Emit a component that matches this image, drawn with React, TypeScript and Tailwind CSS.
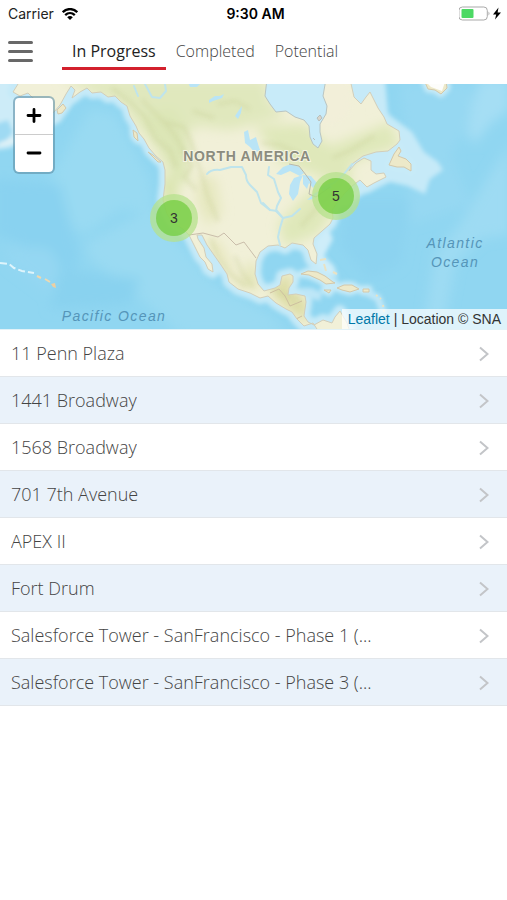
import React, { useState } from 'react';

interface Project {
  id: number;
  name: string;
}

interface Cluster {
  id: number;
  count: number;
  position: string;
}

const TABS = ['In Progress', 'Completed', 'Potential'];

const PROJECTS: Project[] = [
  { id: 1, name: '11 Penn Plaza' },
  { id: 2, name: '1441 Broadway' },
  { id: 3, name: '1568 Broadway' },
  { id: 4, name: '701 7th Avenue' },
  { id: 5, name: 'APEX II' },
  { id: 6, name: 'Fort Drum' },
  { id: 7, name: 'Salesforce Tower - SanFrancisco - Phase 1 (...' },
  { id: 8, name: 'Salesforce Tower - SanFrancisco - Phase 3 (...' },
];

const CLUSTERS: Cluster[] = [
  { id: 1, count: 3, position: 'left-[150px] top-[110px]' },
  { id: 2, count: 5, position: 'left-[312px] top-[88px]' },
];

// Coastlines, in map units
const MAINLAND =
  'M12 -5 L18 0 L13 8 L20 12 L28 9 L33 14 L40 17 L46 22 L40 36 L54 28 L60 21 L66 10 L71 2 L75 6 L72 14 L80 8 L87 4 L92 9 L101 8 L108 13 L115 12 L121 18 L127 22 L130 32 L136 42 L139 49 L144 55 L149 64 L156 72 L163 78 L165 86 L165 100 L163 116 L167 130 L173 139 L183 145 L189 151 L192 157 L196 165 L200 173 L205 178 L208 185 L213 188 L212 180 L206 173 L204 164 L198 155 L197 151 L202 151 L207 161 L214 171 L221 181 L227 190 L229 198 L238 205 L250 209 L260 214 L268 212 L276 219 L286 225 L292 228 L297 235 L304 242 L313 239 L319 248 L350 248 L347 239 L340 227 L335 233 L332 239 L323 236 L314 241 L308 238 L304 232 L306 218 L305 212 L296 210 L288 211 L289 204 L293 198 L293 192 L290 190 L282 192 L280 201 L275 204 L264 207 L258 200 L255 190 L256 177 L260 168 L268 162 L278 161 L285 164 L292 159 L303 161 L308 166 L311 176 L316 180 L317 170 L313 160 L314 154 L322 147 L330 140 L333 134 L332 126 L337 119 L344 110 L352 102 L360 96 L367 103 L374 99 L386 93 L384 89 L376 90 L371 86 L371 77 L364 74 L356 79 L349 87 L352 80 L363 72 L376 68 L388 67 L397 60 L400 56 L399 47 L387 40 L384 33 L378 24 L370 8 L366 13 L361 20 L354 13 L350 -5 Z';

const ISLANDS = [
  'M389 81 L394 70 L399 63 L401 67 L398 72 L406 75 L411 80 L411 87 L404 83 L397 83 Z',
  'M424 -4 L428 5 L435 6 L441 10 L447 4 L446 -4 Z',
  'M57 26 L63 20 L66 24 L62 29 L58 30 Z',
  'M133 46 L137 49 L138 57 L134 53 Z',
  'M148 68 L153 71 L161 78 L158 78 Z',
  'M301 190 L308 187 L317 188 L325 192 L333 198 L335 199 L326 200 L320 196 L309 191 Z',
  'M337 204 L344 201 L352 201 L359 205 L350 208 L342 206 Z',
  'M363 205 L369 205 L369 208 L363 208 Z',
  'M324 206 L331 206 L329 209 Z',
];

const HUDSON_BAY =
  'M267 -5 L265 12 L270 20 L276 28 L286 27 L295 33 L304 36 L309 42 L310 53 L313 60 L318 64 L322 57 L320 48 L320 40 L326 30 L327 22 L323 12 L326 -5 Z';

const LAKES = [
  'M276 90 L283 83 L291 80 L299 83 L304 89 L300 92 L290 87 L281 91 Z',
  'M290 101 L294 94 L303 91 L300 98 L298 110 L293 117 L289 110 Z',
  'M303 91 L311 92 L317 99 L313 104 L309 99 L307 105 L303 100 Z',
  'M307 116 L315 109 L320 107 L313 115 Z',
  'M321 104 L331 101 L332 104 L323 107 Z',
  'M244 48 L248 46 L250 56 L256 53 L258 60 L260 66 L255 69 L250 63 L245 59 Z',
  'M209 16 L215 12 L220 12 L224 10 L222 14 L213 17 L209 19 Z',
  'M235 32 L239 26 L242 22 L241 29 L238 35 Z',
  'M188 -2 L200 0 L197 3 L190 3 Z',
];

const RIVERS = [
  'M207 90 Q211 85 220 86 L231 83 L242 83 L246 91 Q246 97 250 101 L257 108 L261 119 L270 126',
  'M269 83 L268 91 L274 95 L278 108 L281 114 L277 122 L276 127 L283 134 L280 144 L278 153 L280 161',
  'M263 119 L270 126 L277 127 L282 133',
  'M134 2 L138 12 M145 0 L152 13 L160 14 L166 7 L165 0',
  'M321 104 L334 99 L344 90 L352 80',
  'M300 125 L292 132 L283 134',
];

const MapTiles: React.FC = () => (
  <svg
    className="absolute inset-0 h-full w-full"
    viewBox="0 0 507 245"
    preserveAspectRatio="xMidYMid slice"
    role="img"
    aria-label="Map of North America"
  >
    <defs>
      <filter id="relief" x="-20%" y="-20%" width="140%" height="140%">
        <feGaussianBlur stdDeviation="6" />
      </filter>
      <filter id="shelf" x="-20%" y="-20%" width="140%" height="140%">
        <feGaussianBlur stdDeviation="2" />
      </filter>
      <clipPath id="land">
        <path d={MAINLAND} />
      </clipPath>
    </defs>

    <rect width="507" height="245" fill="#90d6f1" />

    {/* Ocean floor */}
    <g filter="url(#relief)">
      <path d="M55 85 L90 25 L115 30 L150 95 L155 130 L120 125 L85 150 L40 130 Z" fill="#99daf2" />
      <path d="M85 160 L150 125 L215 200 L270 230 L290 250 L180 250 L130 205 L90 175 Z" fill="#9adaf2" />
      <path d="M-5 95 L60 100 L80 175 L60 200 L20 160 L-5 150 Z" fill="#89d2f0" />
      <path d="M5 160 L50 165 L65 190 L50 210 L10 180 Z" fill="#94d7f2" />
      <path d="M60 185 L140 195 L130 220 L50 225 Z" fill="#89d2ef" />
      <path d="M400 0 L470 0 L475 30 L450 70 L470 120 L410 140 L405 60 Z" fill="#96d8f2" />
      <path d="M480 -5 L510 -5 L510 25 L490 40 L475 60 L467 50 L472 20 Z" fill="#a5def4" />
      <path d="M490 90 L510 60 L510 150 L480 155 L455 180 L445 235 L425 235 L435 170 L460 140 Z" fill="#9edbf3" />
      <path d="M350 115 L410 115 L400 180 L370 195 L340 160 Z" fill="#8cd3f0" />
    </g>

    {/* Continental shelf */}
    <g filter="url(#shelf)">
      <path d="M-5 -5 L90 -5 L80 10 L60 38 L38 48 L10 64 L-5 66 Z" fill="#cdecf8" />
      <path d="M-5 40 L8 36 L13 48 L5 58 L-5 60 Z" fill="#9fdaf3" />
      <path d={MAINLAND} fill="none" stroke="#c6eaf8" strokeWidth="12" strokeLinejoin="round" />
      <path d="M352 -5 L385 -5 L388 30 L412 48 L424 68 L438 78 L443 86 L430 95 L425 110 L408 102 L390 98 L360 112 L345 125 L340 105 Z" fill="#c6eaf8" />
      <path d="M316 158 L328 144 L333 155 L324 172 L334 182 L338 194 L328 190 L318 184 Z" fill="#ceedf9" />
      <path d="M305 212 L320 217 L322 209 L312 204 L296 204 Z" fill="#bde6f7" />
      {ISLANDS.map((d) => (
        <path key={d} d={d} fill="none" stroke="#c8ebf8" strokeWidth="7" strokeLinejoin="round" />
      ))}
      <path d="M0 60 L14 56" stroke="#eaf5f6" strokeWidth="3" />
      <path d="M366 208 L378 214 L384 230" fill="none" stroke="#bfe7f7" strokeWidth="7" />
    </g>

    {/* Land */}
    <path d={MAINLAND} fill="#f1f0d8" />
    <g clipPath="url(#land)">
      <g filter="url(#relief)">
        <path d="M60 -5 L265 -5 L285 32 L230 46 L195 42 L180 60 L160 70 L120 20 Z" fill="#e0e8bd" />
        <path d="M140 30 L175 25 L190 60 L187 100 L175 100 L160 70 Z" fill="#dce6b6" />
        <path d="M255 42 L305 40 L330 62 L390 38 L400 62 L360 75 L330 96 L280 78 Z" fill="#dfe8ba" />
        <path d="M305 112 L350 78 L352 100 L318 150 L285 163 L278 140 Z" fill="#dfe8ba" />
        <path d="M198 90 L216 95 L222 130 L207 142 L196 118 Z" fill="#e6e8c0" />
        <path d="M160 90 L176 98 L180 135 L165 120 Z" fill="#d8e4ac" />
        <path d="M205 153 L217 158 L236 192 L260 205 L240 203 L222 180 Z" fill="#e2e2b0" />
        <path d="M280 193 L294 190 L290 208 L307 215 L308 240 L284 222 L270 209 Z" fill="#dcdca3" />
        <path d="M245 180 L254 180 L259 207 L250 202 Z" fill="#e0e3b0" />
        <path d="M265 -5 L325 -5 L350 -5 L352 30 L325 45 L310 35 L270 20 Z" fill="#f2efd9" />
      </g>
      <g fill="none" stroke="#c5cd93" strokeWidth="3" opacity="0.35" filter="url(#shelf)">
        <path d="M112 4 L130 18 L144 32 L156 55 L170 67 L176 83" />
        <path d="M142 16 L160 34 L174 50 L185 68" />
        <path d="M164 38 L184 43 L191 58 L202 91 L207 111 L218 137" />
        <path d="M181 65 L192 82 L184 93 L196 106" />
        <path d="M211 155 L218 173 L230 190 L246 202 M235 172 L243 190 L253 203" />
        <path d="M301 142 L318 123 L335 107" />
        <path d="M270 204 L285 211 L299 214" />
        <path d="M218 20 L235 17 L250 25 M193 27 L214 34 M262 59 L280 61 L302 71 M333 74 L351 66 L374 52" />
      </g>
      <path d="M189 151 L203 149 L218 153 L224 149 L236 161 L244 158 L256 174" fill="none" stroke="#c9bdaa" strokeWidth="1" />
      <path d="M270 209 L279 205 L285 212 L290 222 L302 217 M302 232 L296 235" fill="none" stroke="#cdbf9f" strokeWidth="1" />
    </g>
    <path d={MAINLAND} fill="none" stroke="#d2ceba" strokeWidth="1" strokeLinejoin="round" />
    {ISLANDS.map((d) => (
      <path key={d} d={d} fill="#ede9c9" stroke="#d3c8ab" strokeWidth="1" strokeLinejoin="round" />
    ))}
    <path d="M426 -2 L431 3 L442 7 L445 -2 Z" fill="#fdfdfb" />

    {/* Lakes and rivers */}
    {RIVERS.map((d) => (
      <path key={d} d={d} fill="none" stroke="#bfe4ec" strokeWidth="2" strokeLinecap="round" strokeLinejoin="round" />
    ))}
    {LAKES.map((d) => (
      <path key={d} d={d} fill="#b9e4f6" />
    ))}
    <path d={HUDSON_BAY} fill="#c8ebf9" stroke="#b9c5c2" strokeWidth="1" />
    <path d="M289 80 L299 82 L306 91 L311 98 L309 110 L316 113 L330 103" fill="none" stroke="#b9b9ad" strokeWidth="1" />
    <path d="M317 34 L320 31 L322 34 L319 37 Z M313 54 L315 56" fill="#d8d5cc" stroke="#b7bfbb" />

    {/* Hawaii, Bahamas and the Antilles */}
    <path d="M0 179 L9 180 L14 184 L22 187 L34 189" fill="none" stroke="#dff4fb" strokeWidth="2" strokeDasharray="7 3" />
    <path d="M37 192 L41 194 M45 195 L50 198" fill="none" stroke="#eed9b0" strokeWidth="2" />
    <path d="M51 200 L55 199 L56 204 L53 203 Z" fill="#efcfa0" />
    <path d="M320 176 L326 175 M324 180 L326 187 M333 188 L337 190" fill="none" stroke="#e9e2c4" strokeWidth="2" />
    <path d="M376 211 L381 215 M383 221 L384 228" fill="none" stroke="#e9e2c4" strokeWidth="2" strokeDasharray="2 3" />

    <g fontFamily='"Liberation Sans", Arial, sans-serif'>
      <text x="247" y="77" textAnchor="middle" className="fill-[#8b8c7f] stroke-[#f5f4e2] stroke-2 text-sm font-bold tracking-wider [paint-order:stroke]">
        NORTH AMERICA
      </text>
      <g className="fill-[#5595b9] text-sm italic tracking-widest">
        <text x="114" y="237" textAnchor="middle">Pacific Ocean</text>
        <text x="455" y="164" textAnchor="middle">Atlantic</text>
        <text x="455" y="183" textAnchor="middle">Ocean</text>
      </g>
    </g>
  </svg>
);

const StatusBar: React.FC = () => (
  <div className="grid h-7 grid-cols-3 items-center pr-1 pl-2 font-['Inter','Liberation_Sans',sans-serif] text-sm text-[#222]">
    <div className="flex items-center gap-2">
      <span>Carrier</span>
      <svg className="h-3 w-4" viewBox="0 0 16 12" fill="none" stroke="#000" strokeWidth="2.3" aria-hidden="true">
        <path d="M0.7 4.2 C4.8 0 11.2 0 15.3 4.2" />
        <path d="M3.2 7.2 C6 4.5 10 4.5 12.8 7.2" />
        <path d="M5.2 9.2 C6.9 7.6 9.1 7.6 10.8 9.2 L8 12 Z" fill="#000" stroke="none" />
      </svg>
    </div>
    <span className="text-center font-semibold whitespace-nowrap text-black">9:30 AM</span>
    <svg className="h-4 w-11 justify-self-end" viewBox="0 0 44 16" aria-hidden="true">
      <rect x="-0.1" y="1" width="28.4" height="13" rx="3.5" fill="#fff" stroke="#a9a9a9" />
      <rect x="2.5" y="3" width="12" height="9" rx="1" fill="#4cd964" />
      <path d="M29.5 5.5 Q31.5 7.5 29.5 9.5 Z" fill="#a9a9a9" />
      <path d="M39.5 1.5 L34 8.4 H37.2 L36 13.6 L42 6.4 H38.6 Z" fill="#000" />
    </svg>
  </div>
);

const App: React.FC = () => {
  const [activeTab, setActiveTab] = useState(TABS[0]);

  return (
    <div className="min-h-screen bg-white font-['Open_Sans','Noto_Sans',sans-serif]">
      <StatusBar />

      <header className="flex h-14 items-start pl-2">
        <button type="button" aria-label="Menu" className="mt-[13px] flex w-[25px] flex-col gap-[6px]">
          <span className="h-[3px] w-full rounded-sm bg-[#686868]" />
          <span className="h-[3px] w-full rounded-sm bg-[#686868]" />
          <span className="h-[3px] w-full rounded-sm bg-[#686868]" />
        </button>
        <nav className="ml-[29px] flex">
          {TABS.map((tab) => (
            <button
              key={tab}
              type="button"
              onClick={() => setActiveTab(tab)}
              className={`h-[42px] border-b-[3px] px-[10px] pt-[6px] text-base whitespace-nowrap ${
                activeTab === tab ? 'border-[#d3202d] text-[#222]' : 'border-transparent font-light text-[#444]'
              }`}
            >
              {tab}
            </button>
          ))}
        </nav>
      </header>

      <section className="relative h-[245px] overflow-hidden">
        <MapTiles />

        <div className="absolute top-3 left-[13px] flex w-[42px] flex-col overflow-hidden rounded-md border-2 border-[#5f8fa6]/60 bg-white bg-clip-padding">
          <button type="button" aria-label="Zoom in" className="flex h-[37px] items-center justify-center border-b border-[#ccc]">
            <svg className="h-4 w-4" viewBox="0 0 16 16" stroke="#000" strokeWidth="2.8" strokeLinecap="round" aria-hidden="true">
              <path d="M2 7.5 H14 M8 1.5 V13.5" />
            </svg>
          </button>
          <button type="button" aria-label="Zoom out" className="flex h-[37px] items-center justify-center">
            <svg className="h-4 w-4" viewBox="0 0 16 16" stroke="#000" strokeWidth="2.8" strokeLinecap="round" aria-hidden="true">
              <path d="M2 7 H14" />
            </svg>
          </button>
        </div>

        {CLUSTERS.map((cluster) => (
          <button
            key={cluster.id}
            type="button"
            className={`absolute flex h-12 w-12 items-center justify-center rounded-full bg-[#b5e28c]/75 ${cluster.position}`}
          >
            <span className="flex h-9 w-9 items-center justify-center rounded-full bg-[#6ecc39]/70 font-['Liberation_Sans',Arial,sans-serif] text-sm text-[#333]">
              {cluster.count}
            </span>
          </button>
        ))}

        <div className="absolute right-0 bottom-0 bg-white/70 px-[6px] font-['Liberation_Sans',Arial,sans-serif] text-sm leading-5 text-[#333]">
          <a href="#leaflet" className="text-[#0078a8]">Leaflet</a> | Location © SNA
        </div>
      </section>

      <ul className="border-t border-[#e2f2f8]">
        {PROJECTS.map((project) => (
          <li key={project.id} className="border-b border-[#e2e6ea] odd:bg-white even:bg-[#eaf2fa]">
            <a href={`#project-${project.id}`} className="flex h-[46px] items-center justify-between pr-[18px] pl-[11px]">
              <span className="truncate text-lg font-light text-[#444]">{project.name}</span>
              <svg className="mt-[2px] h-4 w-[10px] shrink-0" viewBox="0 0 10 16" fill="none" stroke="#c3c5c8" strokeWidth="2" aria-hidden="true">
                <path d="M1 1.5 L8.5 8 L1 14.5" />
              </svg>
            </a>
          </li>
        ))}
      </ul>
    </div>
  );
};

export default App;
